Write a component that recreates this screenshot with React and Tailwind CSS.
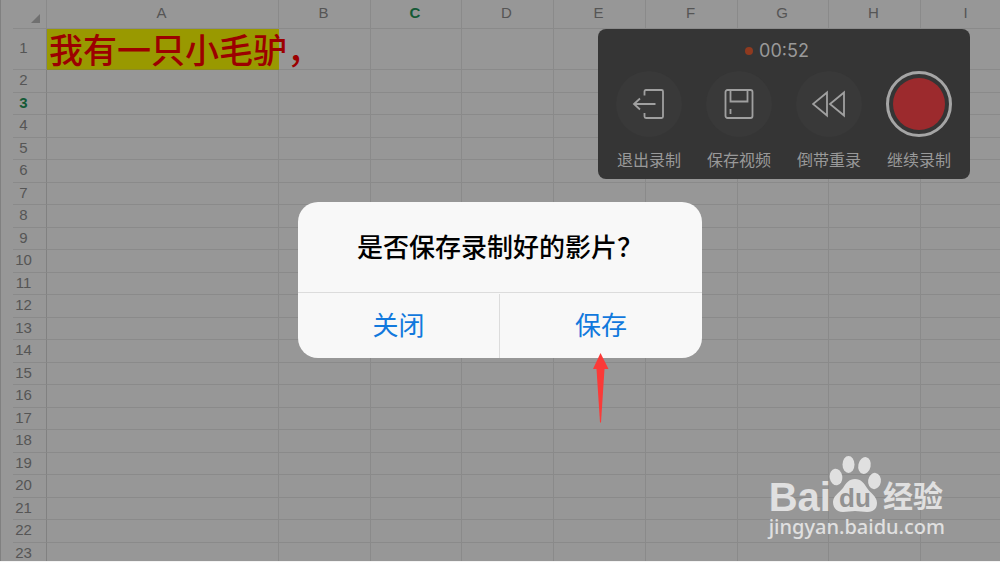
import React from 'react';

const COLUMNS = [
  { name: 'A', width: 'w-[232px]' },
  { name: 'B', width: 'w-[92px]' },
  { name: 'C', width: 'w-[91px]', active: true },
  { name: 'D', width: 'w-[92px]' },
  { name: 'E', width: 'w-[92px]' },
  { name: 'F', width: 'w-[92px]' },
  { name: 'G', width: 'w-[91px]' },
  { name: 'H', width: 'w-[92px]' },
  { name: 'I', width: 'w-[92px]' },
];
const ROWS = Array.from({ length: 23 }, (_, i) => i + 1);

function rowHeight(n) {
  if (n === 1) return 'h-[41px]';
  return n % 2 ? 'h-[22px]' : 'h-[23px]';
}

function Sheet() {
  return (
    <div className="min-h-0 flex-1 overflow-hidden border-l border-[#808080]">
      <table className="w-[1012px] table-fixed border-separate border-spacing-0 text-[15px] leading-4 text-[#555555]">
        <colgroup>
          <col className="w-[12px]" />
          <col className="w-[34px]" />
          {COLUMNS.map((c) => (
            <col key={c.name} className={c.width} />
          ))}
        </colgroup>
        <thead>
          <tr className="h-[29px]">
            <td className="p-0" />
            <td className="border-r border-b border-[#8a8a8a] p-0 pt-2 pr-1.5">
              <svg className="ml-auto block" width="9" height="9" viewBox="0 0 9 9" fill="#707070">
                <path d="M9 0V9H0Z" />
              </svg>
            </td>
            {COLUMNS.map((c) => (
              <th
                key={c.name}
                scope="col"
                className={`border-r border-b border-[#8a8a8a] p-0 pr-0.5 pb-0.5 ${
                  c.active ? 'font-bold text-[#145a36]' : 'font-normal'
                }`}
              >
                {c.name}
              </th>
            ))}
          </tr>
        </thead>
        <tbody>
          {ROWS.map((n) => (
            <tr key={n} className={rowHeight(n)}>
              <td className="p-0" />
              <th
                scope="row"
                className={`border-r border-b border-r-[#818181] border-b-[#8a8a8a] p-0 pr-3 pb-0.5 ${
                  n === 3 ? 'font-bold text-[#145a36]' : 'font-normal'
                }`}
              >
                <span className="-mx-1 block">{n}</span>
              </th>
              {COLUMNS.map((c) =>
                n === 1 && c.name === 'A' ? (
                  <td
                    key={c.name}
                    className="border-b border-[#8c8c20] bg-[#999900] p-0 pl-0.5 align-middle font-['Noto_Sans_CJK_SC',sans-serif] text-[34px] leading-9 font-medium whitespace-nowrap text-[#9c0000]"
                  >
                    我有一只小毛驴，
                  </td>
                ) : (
                  <td key={c.name} className="border-r border-b border-[#8a8a8a] p-0" />
                )
              )}
            </tr>
          ))}
        </tbody>
      </table>
    </div>
  );
}

function ExitIcon() {
  return (
    <svg width="34" height="34" viewBox="0 0 34 34" fill="none" stroke="#a0a0a0" strokeWidth="1.8">
      <path d="M12.500 8.500V4.500Q12.500 3 14 3H29.500Q31 3 31 4.500V29.500Q31 31 29.500 31H14Q12.500 31 12.500 29.500V26" />
      <path d="M23.500 17H2M8 11.500L2 17L8 22.500" />
    </svg>
  );
}

function SaveIcon() {
  return (
    <svg width="34" height="34" viewBox="0 0 34 34" fill="none" stroke="#a0a0a0" strokeWidth="1.8">
      <rect x="3.500" y="3" width="27" height="28" rx="2" />
      <path d="M8.500 3V14.500H25.500V3M8.500 22V27" />
    </svg>
  );
}

function RewindIcon() {
  return (
    <svg width="34" height="34" viewBox="0 0 34 34" fill="none" stroke="#a0a0a0" strokeWidth="1.8">
      <path d="M15 5.500V28.500L1 17ZM32 5.500V28.500L18 17Z" />
    </svg>
  );
}

const ACTIONS = [
  { label: '退出录制', icon: <ExitIcon /> },
  { label: '保存视频', icon: <SaveIcon /> },
  { label: '倒带重录', icon: <RewindIcon /> },
  { label: '继续录制', record: true },
];

function Recorder() {
  return (
    <section className="absolute top-[29px] right-[30px] w-[372px] rounded-lg bg-[#353535] px-1.5 pt-2.5 pb-1.5 text-[#999999]">
      <div className="flex h-6 items-center justify-center gap-1.5 pr-3.5 font-['Inter',sans-serif] text-lg leading-6">
        <span className="size-2 rounded-full bg-[#8f3a1f]" />
        <time>00:52</time>
      </div>
      <div className="mt-2 grid grid-cols-4">
        {ACTIONS.map((a) => (
          <button key={a.label} type="button" className="flex flex-col items-center gap-3">
            {a.record ? (
              <span className="flex size-[66px] items-center justify-center rounded-full border-3 border-[#a5a5a5]">
                <span className="size-[52px] rounded-full bg-[#9c2a2d]" />
              </span>
            ) : (
              <span className="flex size-[66px] items-center justify-center rounded-full bg-[#393939]">
                {a.icon}
              </span>
            )}
            <span className="text-base leading-6 whitespace-nowrap">{a.label}</span>
          </button>
        ))}
      </div>
    </section>
  );
}

function SaveDialog() {
  return (
    <div className="absolute inset-0 flex items-center justify-center pb-px">
      <div
        role="dialog"
        aria-labelledby="dialog-title"
        className="relative w-[404px] overflow-hidden rounded-[20px] bg-[#f8f8f8] text-[26px] leading-9"
      >
        <h1
          id="dialog-title"
          className="flex h-[90px] items-center justify-center pt-0.5 font-medium whitespace-nowrap text-black"
        >
          是否保存录制好的影片？
        </h1>
        <div className="grid h-[66px] grid-cols-2 border-t border-[#dcdcdc] pt-px text-[#1279dd]">
          <button type="button" className="border-r border-[#dcdcdc]">
            关闭
          </button>
          <button type="button">保存</button>
        </div>
      </div>
    </div>
  );
}

function Pointer() {
  return (
    <svg
      className="absolute top-[353px] left-1/2 ml-[93px]"
      width="16"
      height="70"
      viewBox="0 0 16 70"
      fill="#fb3a38"
    >
      <path d="M7.500 0L15.500 16H11.500L8 69.500H7L3.500 16H0Z" />
    </svg>
  );
}

function Watermark() {
  return (
    <div className="absolute right-[55px] bottom-[22px] flex flex-col items-start text-[#e0e0e0]">
      <div className="flex items-end">
        <span className="text-[40px] leading-9 font-bold">Bai</span>
        <svg className="mb-0.5 -ml-0.5" width="54" height="58" viewBox="0 0 54 58" fill="currentColor">
          <ellipse cx="7" cy="22" rx="6.300" ry="8.300" transform="rotate(-8 7 22)" />
          <ellipse cx="19.500" cy="9.500" rx="6" ry="8.500" />
          <ellipse cx="35.500" cy="10.500" rx="6.200" ry="8.500" transform="rotate(12 35.500 10.500)" />
          <ellipse cx="45.500" cy="26" rx="6.400" ry="8.200" transform="rotate(8 45.500 26)" />
          <path d="M26 24C32 24 35 28 38 33C41 38 48 41 48 48C48 54 44 57 38 57C34 57 30 56 26 56C22 56 18 57 14 57C8 57 4 53 4 47C4 41 10 38 14 33C17 28 20 24 26 24Z" />
          <text
            x="26"
            y="52"
            textAnchor="middle"
            fill="#929292"
            className="font-['Liberation_Sans',sans-serif] text-[26px] font-bold"
          >
            du
          </text>
        </svg>
        <span className="text-[30px] leading-9 font-bold">经验</span>
      </div>
      <div className="font-['Noto_Sans',sans-serif] text-xl leading-6 font-medium">jingyan.baidu.com</div>
    </div>
  );
}

export default function App() {
  return (
    <main className="relative flex h-screen flex-col overflow-hidden border-b border-[#f4f4f4] bg-[#979797] font-['Liberation_Sans','Noto_Sans_CJK_SC',sans-serif]">
      <Sheet />
      <Recorder />
      <Watermark />
      <SaveDialog />
      <Pointer />
    </main>
  );
}
